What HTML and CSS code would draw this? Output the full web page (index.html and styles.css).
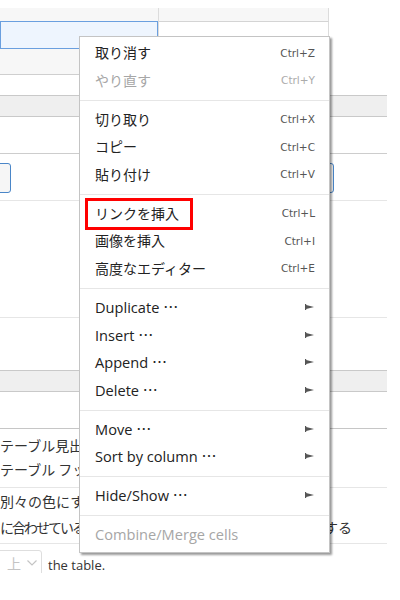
FILE: index.html
```html
<!DOCTYPE html>
<html lang="ja">
<head>
<meta charset="utf-8">
<title>Context menu</title>
<link rel="stylesheet" href="styles.css">
</head>
<body>
<div class="screen">
  <div class="sheet">
    <div class="grid">
      <div class="grid-row head"><div class="cell c1"></div><div class="cell c2"></div></div>
      <div class="grid-row edit"><div class="cell c1"><div class="field"></div></div><div class="cell c2"></div></div>
      <div class="grid-row alt"><div class="cell c1"></div><div class="cell c2"></div></div>
      <div class="grid-row plain"><div class="cell c1"></div><div class="cell c2"></div></div>
    </div>
    <div class="band"></div>
    <div class="row r-gap1"></div>
    <div class="row r-buttons">
      <div class="btn btn-left"></div>
      <div class="btn btn-right"></div>
    </div>
    <div class="row r-tall"></div>
    <div class="row r-gap2"></div>
    <div class="band"></div>
    <div class="row r-gap1 r-dark"></div>
    <div class="row r-text1">
      <div class="line">テーブル見出</div>
      <div class="line">テーブル フッ</div>
    </div>
    <div class="row r-text2">
      <div class="line">別々の色にす</div>
      <div class="line split"><span class="tight">に合わせている</span><span>する</span></div>
    </div>
    <div class="row r-last">
      <div class="select"><span class="sel-val">上</span><svg class="chev" width="10" height="6" viewBox="0 0 10 6"><path d="M0.5 0.5 L5 5 L9.5 0.5" fill="none" stroke="#c4c4c4" stroke-width="1.2"/></svg></div>
      <span class="after">the table.</span>
    </div>
  </div>

  <div class="menu">
    <div class="item"><span class="label">取り消す</span><span class="key">Ctrl+Z</span></div>
    <div class="item disabled"><span class="label">やり直す</span><span class="key">Ctrl+Y</span></div>
    <div class="sep"></div>
    <div class="item"><span class="label">切り取り</span><span class="key">Ctrl+X</span></div>
    <div class="item"><span class="label">コピー</span><span class="key">Ctrl+C</span></div>
    <div class="item"><span class="label">貼り付け</span><span class="key">Ctrl+V</span></div>
    <div class="sep"></div>
    <div class="item"><span class="label marked">リンクを挿入</span><span class="key">Ctrl+L</span></div>
    <div class="item"><span class="label">画像を挿入</span><span class="key">Ctrl+I</span></div>
    <div class="item"><span class="label">高度なエディター</span><span class="key">Ctrl+E</span></div>
    <div class="sep"></div>
    <div class="item"><span class="label en">Duplicate <span class="dots">…</span></span><svg class="arrow" width="9" height="6" viewBox="0 0 9 6"><path d="M0 0h1.2v1.1L9 3 1.2 4.9V6H0z" fill="#555"/></svg></div>
    <div class="item"><span class="label en">Insert <span class="dots">…</span></span><svg class="arrow" width="9" height="6" viewBox="0 0 9 6"><path d="M0 0h1.2v1.1L9 3 1.2 4.9V6H0z" fill="#555"/></svg></div>
    <div class="item"><span class="label en">Append <span class="dots">…</span></span><svg class="arrow" width="9" height="6" viewBox="0 0 9 6"><path d="M0 0h1.2v1.1L9 3 1.2 4.9V6H0z" fill="#555"/></svg></div>
    <div class="item"><span class="label en">Delete <span class="dots">…</span></span><svg class="arrow" width="9" height="6" viewBox="0 0 9 6"><path d="M0 0h1.2v1.1L9 3 1.2 4.9V6H0z" fill="#555"/></svg></div>
    <div class="sep"></div>
    <div class="item"><span class="label en">Move <span class="dots">…</span></span><svg class="arrow" width="9" height="6" viewBox="0 0 9 6"><path d="M0 0h1.2v1.1L9 3 1.2 4.9V6H0z" fill="#555"/></svg></div>
    <div class="item"><span class="label en">Sort by column <span class="dots">…</span></span><svg class="arrow" width="9" height="6" viewBox="0 0 9 6"><path d="M0 0h1.2v1.1L9 3 1.2 4.9V6H0z" fill="#555"/></svg></div>
    <div class="sep"></div>
    <div class="item"><span class="label en">Hide/Show <span class="dots">…</span></span><svg class="arrow" width="9" height="6" viewBox="0 0 9 6"><path d="M0 0h1.2v1.1L9 3 1.2 4.9V6H0z" fill="#555"/></svg></div>
    <div class="sep"></div>
    <div class="item disabled"><span class="label en">Combine/Merge cells</span></div>
  </div>
</div>
</body>
</html>
```
FILE: styles.css
```css
* { box-sizing: border-box; }
html, body { margin: 0; padding: 0; background: #fff; }
body {
  width: 400px;
  height: 600px;
  overflow: hidden;
  font-family: "Noto Sans CJK JP", sans-serif;
  color: #333;
}
.screen {
  position: relative;
  width: 400px;
  height: 600px;
  overflow: hidden;
}
.sheet {
  padding-top: 8px;
  width: 387px;
}

/* top table */
.grid { width: 329px; }
.grid-row { display: flex; }
.cell { border-right: 1px solid #dcdcdc; }
.c1 { width: 159px; }
.c2 { width: 170px; }
.head { height: 13px; background: #f7f7f7; }
.edit { height: 28px; }
.edit .c2 { border-top: 1px solid #d4d4d4; }
.field {
  width: 158px;
  height: 28px;
  border: 1px solid #6a9fdf;
  background: #eef5fe;
}
.alt { height: 26px; background: #f7f7f7; border-bottom: 1px solid #cfcfcf; }
.plain { height: 20px; }

/* bands and rows */
.band {
  height: 22px;
  background: #efefef;
  border-top: 1px solid #c9c9c9;
  border-bottom: 1px solid #c9c9c9;
}
.row { width: 387px; }
.r-gap1 { height: 37px; border-bottom: 1px solid #cdcdcd; }
.r-dark { border-bottom-color: #c6c6c6; }
.r-buttons {
  height: 47px;
  border-bottom: 1px solid #e6e6e6;
  display: flex;
  justify-content: space-between;
  padding: 9px 53px 0 0;
}
.btn {
  height: 30px;
  border: 1px solid #4a86c8;
  border-radius: 3px;
  background: #f6f6f6;
}
.btn-left { width: 41px; margin-left: -30px; }
.btn-right { width: 160px; }
.r-tall { height: 117px; border-bottom: 1px solid #e6e6e6; }
.r-gap2 { height: 52px; }
.r-text1 {
  height: 59px;
  padding-top: 4px;
  border-bottom: 1px solid #e6e6e6;
}
.r-text2 {
  height: 56px;
  border-bottom: 1px solid #e6e6e6;
}
.line {
  font-size: 14px;
  line-height: 24px;
  white-space: nowrap;
  color: #333;
}
.r-text2 .line { line-height: 26px; }
.split {
  display: flex;
  justify-content: space-between;
  padding-right: 35px;
}
.tight { letter-spacing: -2px; }
.r-last {
  height: 29px;
  overflow: hidden;
  display: flex;
  align-items: flex-start;
}
.select {
  width: 62px;
  height: 26px;
  margin-top: 6px;
  margin-left: -20px;
  border: 1px solid #dedede;
  border-radius: 3px;
  display: flex;
  align-items: center;
  padding-left: 26px;
  gap: 6px;
  flex-shrink: 0;
}
.sel-val { font-size: 14px; color: #c4c4c4; line-height: 16px; }
.chev { display: block; }
.after {
  margin: 13px 0 0 6px;
  font-family: "Open Sans", sans-serif;
  font-size: 13px;
  line-height: 16px;
  color: #333;
}

/* context menu */
.menu {
  position: absolute;
  left: 79px;
  top: 36px;
  width: 251px;
  padding: 2px 0 4px;
  background: #fff;
  border: 1px solid #c4c4c4;
  box-shadow: 2px 2px 2px rgba(0, 0, 0, 0.4);
}
.item {
  display: flex;
  align-items: center;
  height: 27.5px;
  padding: 0 14px 0 15px;
  color: #222;
}
.label {
  font-family: "Open Sans", "Noto Sans CJK JP", sans-serif;
  font-size: 14px;
  line-height: 27.5px;
  white-space: nowrap;
}
.label.en { font-size: 14.6px; }
.dots {
  font-family: "Noto Sans CJK JP", sans-serif;
  font-size: 15px;
  letter-spacing: 1px;
}
.key {
  margin-left: auto;
  font-family: "DejaVu Sans", sans-serif;
  font-size: 10.5px;
  color: #555;
}
.arrow { margin-left: auto; display: block; margin-right: 1px; }
.disabled { color: #a6a6a6; }
.disabled .key { color: #ababab; }
.sep {
  height: 1px;
  margin: 6px 0 4.5px;
  background: #e6e6e6;
}
.marked {
  position: relative;
  display: inline-block;
}
.marked::after {
  content: "";
  position: absolute;
  left: -10px;
  right: -14px;
  top: -1.5px;
  bottom: -3px;
  border: 3px solid #ff0000;
}
```
